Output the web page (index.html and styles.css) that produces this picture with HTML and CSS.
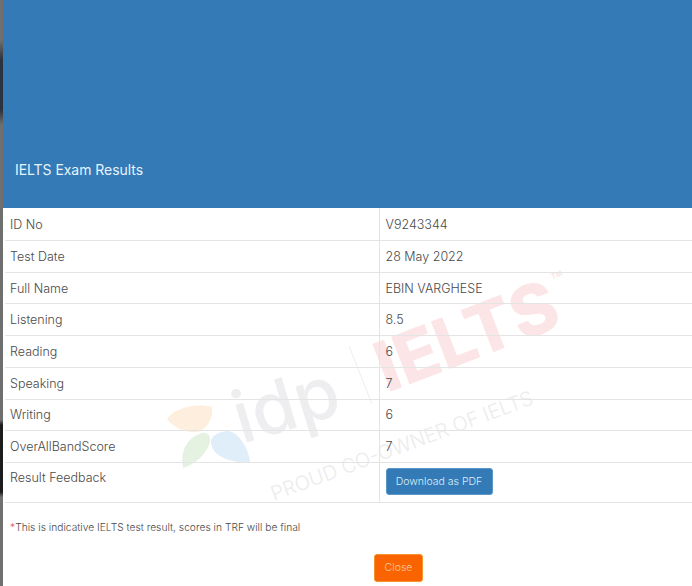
FILE: index.html
```html
<!DOCTYPE html>
<html lang="en">
<head>
<meta charset="utf-8">
<title>IELTS Exam Results</title>
<link rel="stylesheet" href="styles.css">
</head>
<body>
<div class="page">
  <div class="backdrop"></div>
  <main class="modal">
    <header class="modal-header"><h1 class="modal-title">IELTS Exam Results</h1></header>
    <section class="modal-body">
      <svg class="watermark" width="689" height="378" viewBox="3 208 689 378" aria-hidden="true">
        <path class="petal-orange" d="M167 419C175 407 197 403 212 407C213 418 208 428 198 432C186 433 174 428 167 419Z"/>
        <path class="petal-green" d="M183 468C180 452 186 438 202 433C208 432 211 436 210 442C207 453 196 464 183 468Z"/>
        <path class="petal-blue" d="M211 440C214 433 226 429 232 432C243 438 249 452 250 462C236 464 210 458 211 440Z"/>
        <text class="wm-idp" transform="translate(242 444) rotate(-17)">idp</text>
        <path class="wm-sep" d="M349 346L372 404"/>
        <text class="wm-ielts" transform="translate(387 393) rotate(-21)">IELTS</text>
        <text class="wm-tm" transform="translate(552 279) rotate(-19)">TM</text>
        <text class="wm-proud" transform="translate(274 501) rotate(-20.5)">PROUD CO-OWNER OF IELTS</text>
      </svg>
      <table class="results">
        <tbody>
          <tr class="row-first"><td>ID No</td><td>V9243344</td></tr>
          <tr><td>Test Date</td><td>28 May 2022</td></tr>
          <tr><td>Full Name</td><td>EBIN VARGHESE</td></tr>
          <tr><td>Listening</td><td>8.5</td></tr>
          <tr><td>Reading</td><td>6</td></tr>
          <tr><td>Speaking</td><td>7</td></tr>
          <tr><td>Writing</td><td>6</td></tr>
          <tr><td>OverAllBandScore</td><td>7</td></tr>
          <tr class="row-action"><td>Result Feedback</td><td><button class="btn btn-primary" type="button">Download as PDF</button></td></tr>
        </tbody>
      </table>
      <p class="note"><span class="star">*</span>This is indicative IELTS test result, scores in TRF will be final</p>
      <div class="footer"><button class="btn btn-close" type="button">Close</button></div>
    </section>
  </main>
</div>
</body>
</html>
```

FILE: styles.css
```css
* { box-sizing: border-box; }
html, body { margin: 0; padding: 0; background: #fff; }
body { width: 692px; height: 586px; overflow: hidden; font-family: "Inter", "Liberation Sans", sans-serif; color: #555; }
.page { display: flex; height: 586px; }
.backdrop {
  width: 3px; flex: none;
  background: linear-gradient(#6f6f6f 0, #6f6f6f 40px, #2b3340 60px, #2b3340 110px, #6f6f6f 125px, #6f6f6f 420px, #1c1c1c 425px, #1c1c1c 492px, #707070 497px, #707070 100%);
}
.modal { flex: 1; min-width: 0; background: #fff; display: flex; flex-direction: column; }
.modal-header { height: 208px; background: #337ab7; display: flex; align-items: flex-end; padding: 0 12px 29px; }
.modal-title { margin: 0; font-size: 14px; line-height: 18px; font-weight: 400; letter-spacing: -0.05px; color: #e6f3fb; }
.modal-body { position: relative; flex: 1; }
.watermark { position: absolute; left: 0; top: 0; }
.petal-orange { fill: #fdeedd; }
.petal-green { fill: #e5f2e2; }
.petal-blue { fill: #e0eefa; }
.wm-idp { font-family: "Inter", sans-serif; font-size: 72px; font-weight: 500; fill: #eeeef0; }
.wm-sep { stroke: #eeeeee; stroke-width: 1; fill: none; }
.wm-ielts { font-family: "Inter", sans-serif; font-size: 70px; font-weight: 800; fill: #fce5e7; }
.wm-tm { font-family: "Liberation Sans", sans-serif; font-size: 8px; font-weight: 700; fill: #f8e6e6; }
.wm-proud { font-family: "Inter", sans-serif; font-size: 20px; font-weight: 300; fill: #ececec; }
.results { position: relative; width: 687px; margin-left: 2px; border-collapse: collapse; table-layout: fixed; font-size: 12.5px; font-weight: 300; color: #4a4a4a; }
.results td { height: 31.7px; padding: 0 6px 0 5px; border-bottom: 1px solid #e4e4e4; vertical-align: middle; }
.results td:first-child { width: 374px; }
.results td:last-child { border-left: 1px solid #e4e4e4; padding-left: 6px; }
.row-first td { height: 32.6px; }
.row-action td { height: 40px; }
.row-action td:first-child { vertical-align: top; padding-top: 7px; }
.btn { display: block; border: 1px solid transparent; border-radius: 3px; font-family: inherit; font-size: 10.5px; font-weight: 300; }
.btn-primary { width: 107px; height: 27px; margin-top: -1px; background: #337ab7; border-color: #5a97c9; color: #dcedf8; padding: 0; }
.note { position: relative; margin: 17px 0 0 7px; font-size: 10.25px; font-weight: 300; line-height: 14px; color: #4a4a4a; }
.star { color: #d9534f; }
.footer { display: flex; justify-content: center; margin-top: 20px; padding-left: 102px; }
.btn-close { width: 49px; height: 28px; background: #f96300; border-color: #f7922f; color: #f9c9a0; padding: 0; }
```
